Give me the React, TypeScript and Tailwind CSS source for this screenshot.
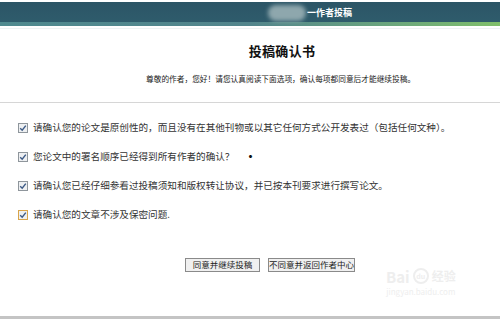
import React from 'react';

const items = [
  { text: '请确认您的论文是原创性的，而且没有在其他刊物或以其它任何方式公开发表过（包括任何文种）。', hot: false },
  { text: '您论文中的署名顺序已经得到所有作者的确认？', dot: true, hot: false },
  { text: '请确认您已经仔细参看过投稿须知和版权转让协议，并已按本刊要求进行撰写论文。', hot: false },
  { text: '请确认您的文章不涉及保密问题.', hot: true },
];

function Check({ hot }: { hot: boolean }) {
  return <span className={`flex h-[10px] w-[10px] shrink-0 items-center justify-center border bg-[#eef0f2] ${hot ? 'border-[#d9a54a]' : 'border-[#8f969c]'}`}>
    <svg viewBox="0 0 8 8" className="h-[8px] w-[8px]">
      <path d="M1.2 4.2 L3.2 6.2 L6.8 1.6" fill="none" stroke="#3c5a86" strokeWidth="1.4" />
    </svg>
  </span>;
}

export default function App() {
  return <div className="relative h-[319px] w-[500px] overflow-hidden bg-white text-[#333]" style={{ fontFamily: '"Noto Sans CJK SC", "Noto Sans", sans-serif' }}>
    {/* Header bar */}
    <div className="pt-[2px]">
      <div className="relative h-[24px] bg-gradient-to-b from-[#2c5566] to-[#2f5d6d]">
        <div className="flex h-[20px] items-center pl-[307px]">
          <span className="text-[9px] font-bold leading-none text-white">一作者投稿</span>
        </div>
        <div className="h-[4px] bg-gradient-to-r from-[#4f8a8f] via-[#52858c] to-[#7fbf6a]" />
        <div className="absolute left-[268px] top-[3px] h-[16px] w-[38px] rounded-[8px] bg-[#8ea7ad] blur-[2px]" />
      </div>
      <div className="mt-[2px] h-[1px] bg-[#eef3f4]" />
    </div>

    {/* Title */}
    <div className="mt-[15px] flex justify-center pl-[64px]">
      <h1 className="text-[13px] font-bold leading-none tracking-[0.3px] text-[#111]">投稿确认书</h1>
    </div>
    <p className="mt-[18px] pl-[146px] text-[7.7px] leading-none text-[#222]">尊敬的作者，您好！请您认真阅读下面选项，确认每项都同意后才能继续投稿。</p>

    <div className="mt-[19px] h-[1px] bg-[#d6d6d6]" />

    {/* Options */}
    <div className="flex flex-col gap-[19px] pl-[18px] pt-[20px]">
      {items.map(item => <label key={item.text} className="flex h-[10px] items-center gap-[5px] text-[9.6px] leading-none text-[#333]">
        <Check hot={item.hot} />
        <span>{item.text}</span>
        {item.dot && <span className="ml-[5px] text-[12px] font-bold text-[#111]">•</span>}
      </label>)}
    </div>

    {/* Buttons */}
    <div className="mt-[38px] flex gap-[8px] pl-[185px]">
      <button className="h-[14px] w-[75px] border border-[#8a8a8a] bg-[#f0f0f0] text-[8.5px] leading-none text-[#222]">同意并继续投稿</button>
      <button className="h-[14px] w-[87px] border border-[#8a8a8a] bg-[#f0f0f0] text-[8.5px] leading-none text-[#222]">不同意并返回作者中心</button>
    </div>

    {/* Watermark */}
    <div className="absolute left-[386px] top-[268px] flex flex-col items-center text-[#eeeeee]">
      <div className="flex items-center gap-[3px] text-[15px] font-bold leading-none">
        <span>Bai</span>
        <span className="flex h-[16px] w-[16px] items-center justify-center rounded-full border-2 border-[#eeeeee] text-[7px]">du</span>
        <span className="text-[12px]">经验</span>
      </div>
      <span className="mt-[4px] text-[8px] leading-none">jingyan.baidu.com</span>
    </div>

    <div className="absolute bottom-0 left-0 h-[3px] w-full bg-[#c4c4c4]" />
  </div>;
}
